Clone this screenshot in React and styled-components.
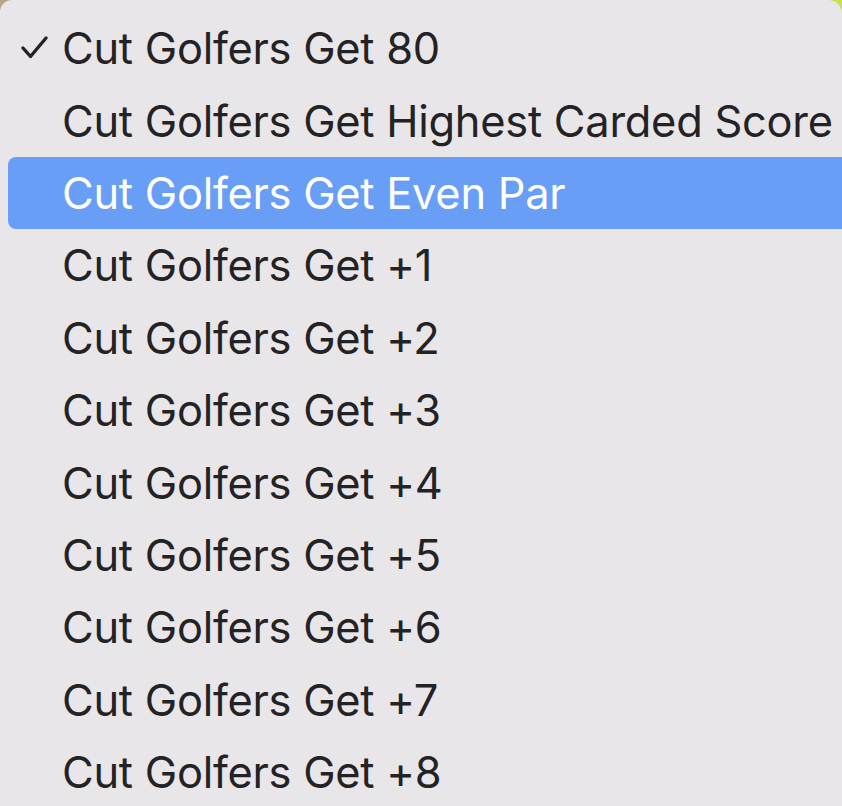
import React from 'react'
import styled, { createGlobalStyle } from 'styled-components'

const Global = createGlobalStyle`
    html, body {
        margin: 0;
        padding: 0;
    }
    body {
        width: 842px;
        height: 806px;
        overflow: hidden;
        background: linear-gradient(90deg, #b8a48a 0%, #c9c98a 60%, #c8e050 100%);
    }
`

const Menu = styled.ul`
    list-style: none;
    margin: 0;
    padding: 12px 0 0 8px;
    width: 842px;
    height: 806px;
    box-sizing: border-box;
    background: #e9e6e9;
    border-radius: 12px 14px 0 0;
    font-family: Inter, "Noto Sans", sans-serif;
    overflow: hidden;
`

const Item = styled.li`
    display: flex;
    align-items: center;
    height: 72.4px;
    padding-left: 12px;
    border-radius: 8px 0 0 8px;
    background: ${({active}) => active ? `#689ef6` : `transparent`};
    color: ${({active}) => active ? `#ffffff` : `#232224`};
    font-size: 43.4px;
    letter-spacing: -0.25px;
    white-space: nowrap;
`

const Check = styled.span`
    width: 42px;
    flex: 0 0 auto;
    display: flex;
    align-items: center;
`

const options = [
    `Cut Golfers Get 80`,
    `Cut Golfers Get Highest Carded Score`,
    `Cut Golfers Get Even Par`,
    `Cut Golfers Get +1`,
    `Cut Golfers Get +2`,
    `Cut Golfers Get +3`,
    `Cut Golfers Get +4`,
    `Cut Golfers Get +5`,
    `Cut Golfers Get +6`,
    `Cut Golfers Get +7`,
    `Cut Golfers Get +8`,
]

const CheckMark = () => (
    <svg width="30" height="24" viewBox="0 0 30 24">
        <path d="M3 12 L10.5 20.5 L26 2" fill="none" stroke="#232224" strokeWidth="3.4" strokeLinecap="round" strokeLinejoin="round" />
    </svg>
)

export default function App() {
    return (
        <>
            <Global />
            <Menu>
                {options.map((label, i) => (
                    <Item key={label} active={i === 2}>
                        <Check>{i === 0 && <CheckMark />}</Check>
                        {label}
                    </Item>
                ))}
            </Menu>
        </>
    )
}
